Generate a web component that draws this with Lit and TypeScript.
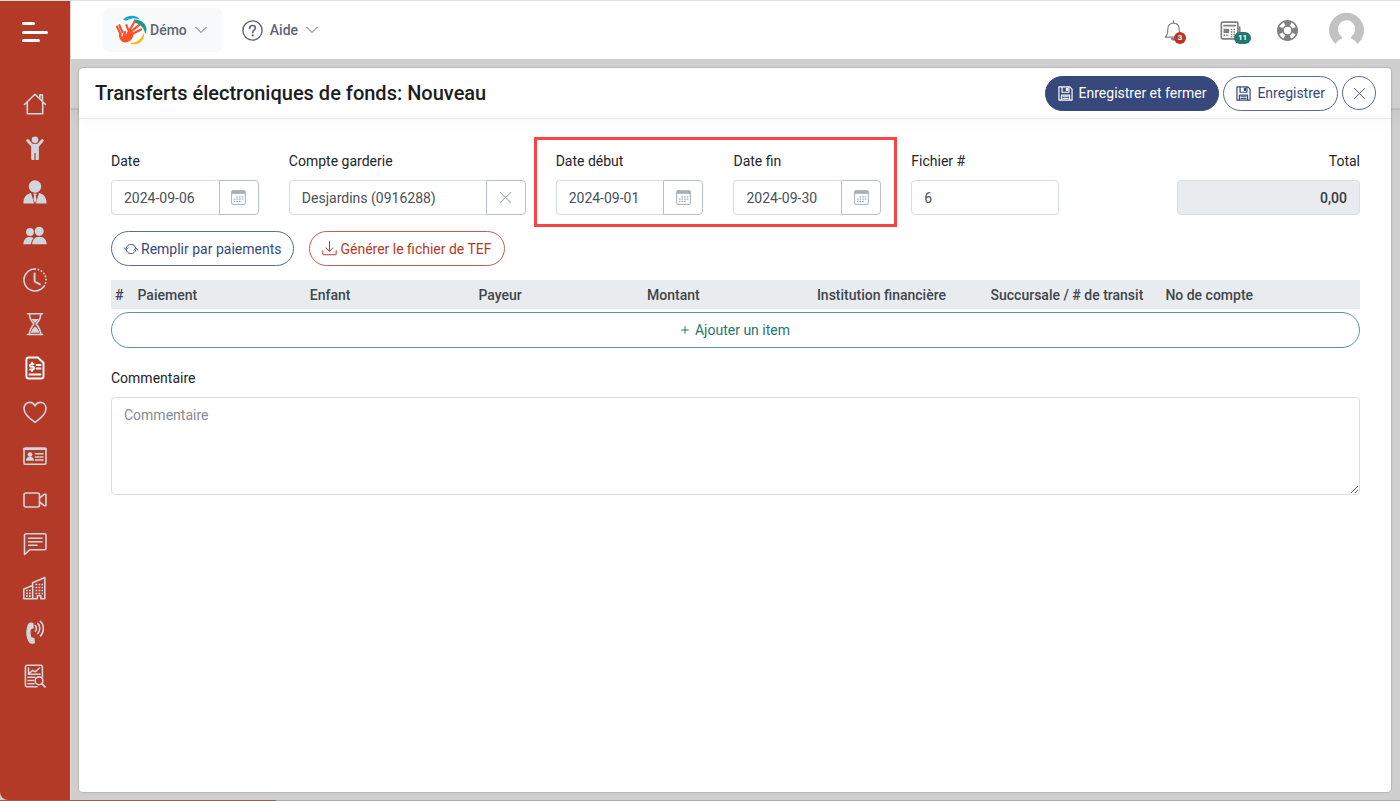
import { LitElement, html, css, svg } from "lit";
import { customElement, property } from "lit/decorators.js";

const GLYPHS: Record<string, unknown> = {
  home: svg`<path class="line" d="M1.500 12.500 12 2.300l10.500 10.200M4.300 10v11.700h15.400V10M16.800 6.500V2.900h2.600v6.200"/>`,
  child: svg`<circle class="fill" cx="12" cy="3.800" r="3.300"/><path class="fill" d="M3.600 3.600a1.400 1.400 0 0 1 2.100 0L9.400 7.700h5.200l3.700-4.100a1.400 1.400 0 0 1 2.100 1.900l-4.500 5V23a1 1 0 0 1-1 .9h-2.300V17h-1.200v6.900H9.200a1 1 0 0 1-1-.9V10.500l-4.600-5a1.400 1.400 0 0 1 0-1.900z"/>`,
  manager: svg`<circle class="fill" cx="12" cy="6.500" r="6.200"/><path class="fill" d="M.4 23.500c0-6 3-9.500 7.600-10.400L11.200 23.500zM23.600 23.500c0-6-3-9.500-7.600-10.400L12.800 23.500zM10.200 13.500h3.600l-1 2.200.8 4.400L12 23l-1.600-3.400.8-4.400z"/>`,
  people: svg`<circle class="fill" cx="7" cy="8" r="3.900"/><circle class="fill" cx="16.200" cy="7.300" r="4.500"/><path class="fill" d="M.3 20.200c.3-4.600 2.800-7.200 6.400-7.200 1.600 0 2.900.4 3.900 1.200-1.500 1.400-2.400 3.400-2.600 6zM9.200 20.200c.3-4.700 3-7.400 7.200-7.400s7 2.700 7.400 7.400z"/>`,
  clock: svg`<path class="line" d="M12 1a11 11 0 1 0 8.800 17.600"/><path class="line dots" d="M12 1a11 11 0 0 1 8.800 17.600"/><path class="line bold" d="M11.600 5.500v8l5.400 2.800"/>`,
  hourglass: svg`<path class="line" d="M4.500 1.700h15M4.500 22.500h15M6.500 1.700c0 5 1.700 7 4.500 10.300-2.800 3.300-4.500 5.500-4.500 10.500M17.700 1.700c0 5-1.700 7-4.500 10.300 2.800 3.300 4.500 5.500 4.500 10.500"/><path class="fill" d="M8.500 7h7.200l-3.600 4zM8 20.800c.3-3 2-4.500 4.100-6.300 2.100 1.800 3.800 3.300 4.100 6.300z"/>`,
  invoice: svg`<path class="line bold" d="M5.500 1.500h9.300l5.700 5.300v13.400a2.300 2.300 0 0 1-2.300 2.300H5.700a2.300 2.300 0 0 1-2.300-2.300V3.800a2.300 2.300 0 0 1 2.300-2.300zM13.500 9h4M13.500 12.500h4M6.500 18.500h11M10.600 8.200H8.300a1.200 1.200 0 0 0 0 2.600h1.300a1.200 1.200 0 0 1 0 2.700H7.200M9 6.800v1.400M9 13.500v1.500"/>`,
  heart: svg`<path class="line" d="M12 22.300C5.500 18 1 14 1 8.600 1 4.800 3.600 2.400 6.600 2.400c2.500 0 4.300 1.300 5.400 3.600 1.100-2.300 2.900-3.600 5.400-3.600 3 0 5.600 2.400 5.600 6.200 0 5.400-4.500 9.400-11 13.700z"/>`,
  card: svg`<rect class="line" x="1" y="4" width="22" height="16.300" rx="1.300"/><path class="line bold" d="M1 5h22"/><circle class="fill" cx="7" cy="10.600" r="2.400"/><path class="fill" d="M3 16.800c0-2.700 1.700-4 4-4s4 1.300 4 4z"/><path class="line" d="M12.500 9.800H20M12.500 13h3.200M17 13h3M12.500 16H20"/>`,
  video: svg`<rect class="line" x="1" y="5" width="15.500" height="14" rx="2"/><path class="line" d="m16.500 10 5-3.800H23v11.600h-1.500l-5-3.800"/>`,
  message: svg`<path class="line" d="M1.500 22.500V3.300A1.500 1.500 0 0 1 3 1.800h18.500A1.500 1.500 0 0 1 23 3.300v12.900a1.500 1.500 0 0 1-1.500 1.500H7zM5.500 6.200h13.500M5.500 9.800h13.500M5.500 13.300h8.500"/>`,
  building: svg`<path class="line" d="M.8 22.800V13l8.900-3.500M9.700 22.800V6.700L21.800 1.500v21.300h-4v-3h-3.500v3H.8"/><path class="line cells" d="M12.500 8.500h7.500M12.500 11.500h7.500M12.500 14.500h7.500M12.500 17.500h7.500M3 14.500h5M3 17.300h5M3 20.100h5"/>`,
  phone: svg`<path class="fill" d="M4 7.200C4.800 3.800 6.300 2.400 8 2.500l1.800.2c.4.100.6.400.7.800l.3 4c0 .5-.2.900-.6 1l-2.200.8c-.7 2.800-.5 5.400.5 8.200l2.300.3c.4 0 .7.400.7.800l.4 4c0 .4-.2.800-.6.900-2.600.8-4.600.3-5.900-2.200C3 17 2.700 11.800 4 7.200z"/><path class="line" d="M12.200 5.500c1.500 1 1.600 4.200.2 5.700M14.700 3.400c2.700 2 2.800 7.200.2 10M17.300 1.400c4 3 4 10.800.2 14.500"/>`,
  report: svg`<path class="line" d="M14 22.700H4.400a2 2 0 0 1-2-2V3.200a2 2 0 0 1 2-2h13a2 2 0 0 1 2 2v10M5.500 4v6.300H17M6.500 9l3.200-2.600 2.500 1.400L16.500 4M5 13.200h7M5 16.500h5.500M5 19.700h6"/><circle class="line" cx="16" cy="16.800" r="3.900"/><path class="line bold" d="m18.800 19.600 3.200 3.200"/>`,
  down: svg`<path class="line" d="m1.500 6.500 10.500 10.500L22.500 6.500"/>`,
  help: svg`<circle class="line" cx="12" cy="12" r="11"/><path class="line bold" d="M8.800 9.600c0-2 1.300-3.300 3.300-3.300s3.200 1.200 3.200 2.900c0 2.300-3.100 2.700-3.100 5.300"/><circle class="fill" cx="12.200" cy="17.600" r="1.300"/>`,
  bell: svg`<path class="line" d="M12 1v2.500M2.500 19.500h19c-2.500-2-3-4-3-9 0-4.200-2.500-7-6.500-7s-6.500 2.800-6.500 7c0 5-.5 7-3 9z"/><path class="fill" d="M9 20.500h6a3 3 0 0 1-6 0z"/>`,
  news: svg`<rect class="line bold" x="1.500" y="2.500" width="19" height="19" rx="1.500"/><path class="line bold" d="M22.500 8v12a1.500 1.500 0 0 1-2 1.500M4.500 6.500h13"/><path class="fill" d="M4 10h6.500v5H4z"/><path class="line cells" d="M12.300 10.800H18M12.300 13.700H18M12.300 16.500H18M4 17.500h6.500M12.300 19H18"/>`,
  buoy: svg`<circle cx="12" cy="12" r="8.300" fill="none" stroke="currentColor" stroke-width="7"/><circle cx="12" cy="12" r="8.100" fill="none" stroke="#fff" stroke-width="4.600" stroke-dasharray="5.700 7.023" stroke-dashoffset="-3.500"/><circle class="line" cx="12" cy="12" r="11.300"/><circle class="line" cx="12" cy="12" r="5"/>`,
  save: svg`<path class="line bold" d="M1.500 1.500H19L22.500 5v17.500h-21zM6.500 1.500V10h11V1.500M5.500 22.500v-8h13v8M8 17.200h8M8 20h8"/><path class="fill" d="M12.500 3h3.500v5h-3.500z"/>`,
  close: svg`<path class="line" d="m2.500 2.500 19 19m0-19-19 19"/>`,
  calendar: svg`<rect class="line" x="1" y="1" width="22" height="22" rx="2"/><path class="fill" d="M1 1.500h22v4.700H1z"/><path class="line grid" d="M8.700 11h12M4.500 14.500h16.200M4.500 18h12"/>`,
  sync: svg`<path class="line" d="M3.800 10.500a8.600 8.600 0 0 1 16.700.6M20.300 13.500a8.600 8.600 0 0 1-16.700-.6M0 9.800l3.600 3.400 3.600-3.400M16.800 14.200l3.600-3.400 3.600 3.400"/>`,
  download: svg`<path class="line" d="M12 1v15M6.500 11l5.500 5.300 5.500-5.300M1.300 15.500V21a1 1 0 0 0 1 1h19.400a1 1 0 0 0 1-1v-5.500"/>`,
  plus: svg`<path class="line" d="M12 2v20M2 12h20"/>`,
  avatar: svg`<path class="fill" d="M4.600 21.300a12 12 0 1 1 14.800 0c-.8-1.900-2.300-3-4.200-3.600V16.300a5.900 6.200 0 1 0-6.400 0v1.400c-1.900.6-3.400 1.700-4.200 3.600z"/>`,
  logo: svg`
    <circle cx="14" cy="14" r="13.500" fill="#fff"/>
    <path d="M6.500 4.200C9.500.8 15-.3 19.300 1.700c1.200.6 2.200 1.400 2.900 2.400-4.200-1.400-8-1.200-12.200 1-1.300.2-2.500-.1-3.500-.9z" fill="#18a8d8"/>
    <path d="M17 4.200c6.500-.3 11.500 4 11.500 9.600 0 1.600-.5 2.900-1.400 3.900-.2-4.600-3.300-8.700-9.600-10.400-1-1-1.200-2.200-.5-3.100z" fill="#109b91"/>
    <path d="M26 16.300c1.400 5.600-2.700 10.900-9 11.100-1.500 0-2.900-.4-3.900-1.200 6.300-.2 10.800-3.600 12.900-9.900z" fill="#fbb814"/>
    <path d="M4.500 18.500 1 10.800M6 16l-2.800-6.500M12 15l-2.300-5.500M12.500 14.500l5-8.500M14 15.500l8-6.500M14.500 18l9-4.500" fill="none" stroke="#fb4e2b" stroke-width="2" stroke-linecap="round"/>
    <path d="M2.500 17.500c1.500.8 2.500 1.800 3.300 3 .8-2 1.200-3.300 1-5.200l2.300-.5c.3 1.500.2 2.500-.1 3.800l3-5 4.500 3.400c-.2 4-2 7-5.500 8.300-4.200 1.500-8.300-1.500-8.500-7.800z" fill="#fb4e2b"/>`,
};

@customElement("app-icon")
export class AppIcon extends LitElement {
  @property() name = "";
  static styles = css`
    :host { display: inline-flex; flex: none; width: 24px; height: 24px; }
    svg { display: block; width: 100%; height: 100%; overflow: visible; }
    .line { fill: none; stroke: currentColor; stroke-width: var(--stroke, 1.6); stroke-linejoin: round; stroke-linecap: round; }
    .line.bold { stroke-width: 1.9; }
    .fill { fill: currentColor; stroke: none; }
    .line.dots { stroke-width: 1.7; stroke-dasharray: 0.3 3; }
    .line.cells { stroke-dasharray: 1.8 1.2; stroke-width: 1.7; stroke-linecap: butt; }
    .line.grid { stroke-dasharray: 2.6 1.6; stroke-width: 2; stroke-linecap: butt; }
  `;
  render() {
    const box = this.name === "logo" ? "0 0 29 28" : "0 0 24 24";
    return html`<svg viewBox=${box} aria-hidden="true">${GLYPHS[this.name]}</svg>`;
  }
}

const NAV = [
  ["home", "Accueil"], ["child", "Enfants"], ["manager", "Personnel"], ["people", "Parents"],
  ["clock", "Horaires"], ["hourglass", "Attente"], ["invoice", "Facturation"], ["heart", "Santé"],
  ["card", "Fiches"], ["video", "Vidéo"], ["message", "Messages"], ["building", "Installations"],
  ["phone", "Appels"], ["report", "Rapports"],
];

const COLUMNS: [string, number][] = [
  ["#", 1.8], ["Paiement", 13.8], ["Enfant", 13.5], ["Payeur", 13.5], ["Montant", 13.6],
  ["Institution financière", 13.9], ["Succursale / # de transit", 14], ["No de compte", 15.9],
];

@customElement("app-root")
export class AppRoot extends LitElement {
  static styles = css`
    :host {
      display: flex; flex-direction: column; min-height: 100vh; box-sizing: border-box;
      border-top: 1px solid #dfdfdf; background: #cfcfcf; color: #212529;
      font: 400 14px/20px Roboto, "Liberation Sans", sans-serif;
    }
    *, *::before, *::after { box-sizing: border-box; }
    button, input, textarea { font: inherit; color: inherit; margin: 0; }
    button { cursor: pointer; background: none; border: 0; padding: 0; }
    .shell { display: flex; flex: 1; }
    .sidebar {
      width: 70px; flex: none; background: #b43a28; color: #d0d6dd; border-bottom-left-radius: 8px;
      display: flex; flex-direction: column; align-items: center;
    }
    .burger { width: 26px; height: 20px; margin: 21px 0 50px; display: flex; flex-direction: column; justify-content: space-between; }
    .bar { height: 3px; border-radius: 2px; background: #fff; width: 26px; }
    .bar.short { width: 13px; }
    .bar.mid { width: 18px; }
    .nav { display: flex; flex-direction: column; gap: 20px; }
    .nav a { display: flex; color: inherit; }
    .nav a.active { color: #fff; }
    .main { flex: 1; min-width: 0; display: flex; flex-direction: column; border-left: 1px solid #e4d3d0; }
    .topbar { height: 58px; flex: none; background: #fff; display: flex; align-items: center; padding: 0 36px 0 32px; }
    .tenant, .help { display: flex; align-items: center; color: #5e6673; font-weight: 500; }
    .tenant { height: 44px; background: #f8f9fb; border-radius: 6px; padding: 0 15px 0 13px; gap: 3px; }
    .tenant .logo { width: 31px; height: 30px; }
    .chev { width: 12px; height: 12px; margin-left: 8px; --stroke: 2; }
    .tenant .chev { margin-left: 5px; }
    .help { margin-left: 20px; }
    .help .q { width: 21px; height: 21px; margin-right: 7px; }
    .tools { margin-left: auto; display: flex; align-items: center; color: #808080; }
    .tool { position: relative; display: flex; margin-right: 36px; }
    .tool app-icon { width: 21px; height: 21px; --stroke: 1.4; }
    .badge {
      position: absolute; left: 11px; top: 12px; min-width: 12px; height: 12px; padding: 0 3px; border-radius: 6px;
      background: #b93623; color: #fff; font: 700 8px/12px Roboto, sans-serif; text-align: center;
    }
    .badge.teal { background: #23776d; left: 14px; padding: 0 4px; }
    .avatar { display: flex; color: #c2c2c2; margin-left: -5px; }
    .avatar app-icon { width: 35px; height: 35px; }
    .stage {
      flex: 1; display: flex; padding: 9px 9px 8px 8px;
      background: linear-gradient(#cfcfcf 0 49px, #bcbcbc 49px 51px, #c9c9c9 51px, #cfcfcf 70px);
    }
    .dialog { flex: 1; min-width: 0; background: #fff; border-radius: 4px; box-shadow: 0 0 1px 1px rgba(0, 0, 0, 0.12); }
    .head { display: flex; align-items: center; min-height: 51px; padding: 0 15px 0 16px; gap: 4px; border-bottom: 1px solid #e9ecef; box-shadow: 0 8px 12px rgba(0, 0, 0, 0.02); }
    .head h1 { margin: 0 auto 0 0; font-size: 20px; line-height: 24px; font-weight: 500; color: #1b1d20; }
    .btn {
      display: inline-flex; align-items: center; justify-content: center; gap: 6px; height: 35px;
      border: 1px solid #5b6a98; border-radius: 18px; padding: 0 12px; color: #36487c; background: #fff;
    }
    .btn app-icon { width: 15px; height: 15px; }
    .btn.primary { background: #36487c; border-color: #36487c; color: #fff; }
    .btn.round { width: 34px; height: 34px; padding: 0; }
    .btn.round app-icon { width: 13px; height: 13px; }
    .btn.tight { gap: 3px; }
    .btn .sync { width: 14px; height: 14px; }
    .btn.danger { color: #b43a28; border-color: #c65c4f; }
    .btn.add { color: #23776d; border-color: #559a92; width: 100%; height: 36px; margin-top: 3px; }
    .btn.add app-icon { width: 8px; height: 8px; --stroke: 3; }
    .body { padding: 32px 31px 32px 32px; }
    .fields { display: grid; grid-template-columns: 148fr 237fr 326fr 148fr 58fr 183fr; column-gap: 30px; }
    .period { position: relative; display: grid; grid-template-columns: 1fr 1fr; column-gap: 30px; }
    .mark { position: absolute; inset: -14px -16px -12px -22px; border: 3px solid #fa4444; pointer-events: none; }
    .field { min-width: 0; display: flex; flex-direction: column; gap: 9px; }
    .group { display: flex; }
    .input {
      flex: none; min-width: 0; width: 100%; height: 35px; border: 1px solid #d8dee4; border-radius: 4px; background: #fff;
      padding: 0 12px; color: #495057; outline: 0;
    }
    .group .input { flex: 1; border-radius: 4px 0 0 4px; border-right: 0; }
    .addon { width: 40px; height: 35px; flex: none; display: flex; align-items: center; justify-content: center; border: 1px solid #b8c0c9; border-radius: 0 4px 4px 0; color: #a7afb8; }
    .addon app-icon { width: 15px; height: 15px; }
    .addon .x { width: 13px; height: 13px; --stroke: 2; }
    .total { grid-column: 6; text-align: right; }
    .total .input { background: #e9ecef; text-align: right; font-weight: 500; color: #343a40; }
    .actions { display: flex; flex-wrap: wrap; gap: 15px; margin: 16px 0 14px; }
    .items { width: 100%; table-layout: fixed; border-collapse: collapse; background: #e9ecef; }
    .items th { text-align: left; height: 29px; padding: 0 4px; font-weight: 500; color: #3f464d; white-space: nowrap; }
    .comment { margin-top: 20px; }
    .comment textarea { display: block; width: 100%; height: 98px; border: 1px solid #d8dee4; border-radius: 4px; padding: 7px 12px; color: #495057; outline: 0; resize: vertical; }
    .comment textarea::placeholder { color: #868c92; opacity: 1; }
    .edge { height: 1px; flex: none; background: linear-gradient(90deg, #a65a4e 0 276px, #ababab 276px); }
  `;

  private dateField(id: string, label: string, value: string) {
    return html`<div class="field">
      <label for=${id}>${label}</label>
      <div class="group">
        <input class="input" id=${id} type="text" .value=${value} />
        <button class="addon" type="button" aria-label="Calendrier"><app-icon name="calendar"></app-icon></button>
      </div>
    </div>`;
  }

  render() {
    return html`
      <div class="shell">
        <aside class="sidebar">
          <button class="burger" type="button" aria-label="Menu">
            <span class="bar short"></span><span class="bar"></span><span class="bar mid"></span>
          </button>
          <nav class="nav">
            ${NAV.map(([icon, label]) => html`<a href="#" class=${icon === "invoice" ? "active" : ""} aria-label=${label}><app-icon name=${icon}></app-icon></a>`)}
          </nav>
        </aside>
        <div class="main">
          <header class="topbar">
            <button class="tenant" type="button"><app-icon class="logo" name="logo"></app-icon>Démo<app-icon class="chev" name="down"></app-icon></button>
            <button class="help" type="button"><app-icon class="q" name="help"></app-icon>Aide<app-icon class="chev" name="down"></app-icon></button>
            <div class="tools">
              <button class="tool" type="button" aria-label="Notifications"><app-icon name="bell"></app-icon><span class="badge">3</span></button>
              <button class="tool" type="button" aria-label="Nouvelles"><app-icon name="news"></app-icon><span class="badge teal">11</span></button>
              <button class="tool" type="button" aria-label="Soutien"><app-icon name="buoy"></app-icon></button>
              <button class="avatar" type="button" aria-label="Profil"><app-icon name="avatar"></app-icon></button>
            </div>
          </header>
          <main class="stage">
            <section class="dialog">
              <header class="head">
                <h1>Transferts électroniques de fonds: Nouveau</h1>
                <button class="btn primary" type="button"><app-icon name="save"></app-icon>Enregistrer et fermer</button>
                <button class="btn" type="button"><app-icon name="save"></app-icon>Enregistrer</button>
                <button class="btn round" type="button" aria-label="Fermer"><app-icon name="close"></app-icon></button>
              </header>
              <div class="body">
                <div class="fields">
                  ${this.dateField("date", "Date", "2024-09-06")}
                  <div class="field">
                    <label for="account">Compte garderie</label>
                    <div class="group">
                      <input class="input" id="account" type="text" .value=${"Desjardins (0916288)"} />
                      <button class="addon" type="button" aria-label="Effacer"><app-icon class="x" name="close"></app-icon></button>
                    </div>
                  </div>
                  <div class="period">
                    ${this.dateField("start", "Date début", "2024-09-01")}
                    ${this.dateField("end", "Date fin", "2024-09-30")}
                    <span class="mark"></span>
                  </div>
                  <div class="field">
                    <label for="file">Fichier #</label>
                    <input class="input" id="file" type="text" .value=${"6"} />
                  </div>
                  <div class="field total">
                    <label for="total">Total</label>
                    <input class="input" id="total" type="text" readonly .value=${"0,00"} />
                  </div>
                </div>
                <div class="actions">
                  <button class="btn tight" type="button"><app-icon class="sync" name="sync"></app-icon>Remplir par paiements</button>
                  <button class="btn tight danger" type="button"><app-icon name="download"></app-icon>Générer le fichier de TEF</button>
                </div>
                <table class="items">
                  <colgroup>${COLUMNS.map(([, w]) => html`<col style="width:${w}%" />`)}</colgroup>
                  <thead><tr>${COLUMNS.map(([name]) => html`<th scope="col">${name}</th>`)}</tr></thead>
                </table>
                <button class="btn add" type="button"><app-icon name="plus"></app-icon>Ajouter un item</button>
                <div class="field comment">
                  <label for="comment">Commentaire</label>
                  <textarea id="comment" placeholder="Commentaire"></textarea>
                </div>
              </div>
            </section>
          </main>
        </div>
      </div>
      <div class="edge"></div>
    `;
  }
}
